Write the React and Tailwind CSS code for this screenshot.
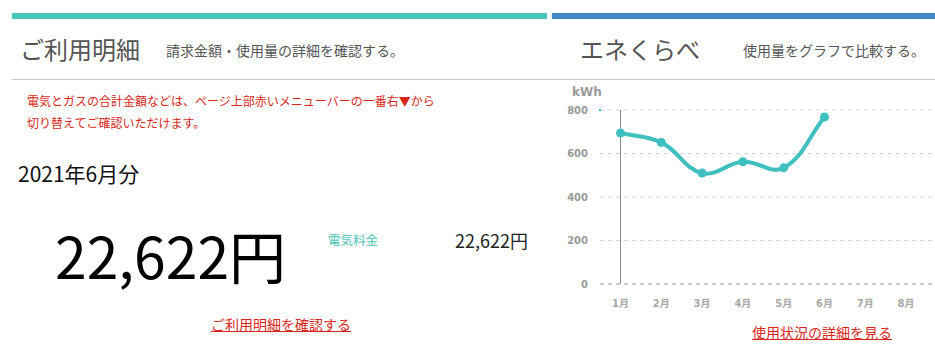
import React from 'react';

const usage = [694, 651, 510, 562, 534, 768];
const months = ['1月', '2月', '3月', '4月', '5月', '6月', '7月', '8月'];
const ticks = [800, 600, 400, 200, 0];

const colX = (i) => 68.5 + i * 40.8;
const valY = (v) => 204 - (v * 174) / 800;

// same spline as chart.js (tension 0.4)
function smoothPath(pts, t = 0.4) {
  const ctrl = pts.map((p, i) => {
    const prev = pts[i - 1] || p;
    const next = pts[i + 1] || p;
    const d01 = Math.hypot(p[0] - prev[0], p[1] - prev[1]);
    const d12 = Math.hypot(next[0] - p[0], next[1] - p[1]);
    const sum = d01 + d12 || 1;
    const fa = (t * d01) / sum;
    const fb = (t * d12) / sum;
    return {
      before: [p[0] - fa * (next[0] - prev[0]), p[1] - fa * (next[1] - prev[1])],
      after: [p[0] + fb * (next[0] - prev[0]), p[1] + fb * (next[1] - prev[1])],
    };
  });
  let d = `M${pts[0][0]},${pts[0][1]}`;
  for (let i = 1; i < pts.length; i++) {
    const a = ctrl[i - 1].after;
    const b = ctrl[i].before;
    d += ` C${a[0]},${a[1]} ${b[0]},${b[1]} ${pts[i][0]},${pts[i][1]}`;
  }
  return d;
}

function UsageChart() {
  const pts = usage.map((v, i) => [colX(i), valY(v)]);
  return (
    <svg width="383" height="239" viewBox="0 0 383 239" className="block">
      <g fontFamily="'DejaVu Sans', 'Noto Sans CJK JP', sans-serif" fontWeight="bold" fill="#9a9a9a">
        <text x="20" y="16" fontSize="12">kWh</text>
        {ticks.map((t) => (
          <g key={t}>
            <line
              x1="48"
              x2="383"
              y1={valY(t)}
              y2={valY(t)}
              stroke={t === 0 ? '#9a9a9a' : '#d6d6d6'}
              strokeDasharray="4 4"
            />
            <text x="36" y={valY(t) + 3.6} fontSize="10" textAnchor="end">{t}</text>
          </g>
        ))}
        {months.map((m, i) => (
          <text key={m} x={colX(i)} y="227" fontSize="10" textAnchor="middle" fill="#a8a8a8">{m}</text>
        ))}
      </g>
      <rect x="47" y="29" width="2" height="2" fill="#3fbfbf" />
      <line x1="68.5" x2="68.5" y1="30" y2="204" stroke="#8a8a8a" />
      <path d={smoothPath(pts)} fill="none" stroke="#3fbfbf" strokeWidth="4" strokeLinecap="round" strokeLinejoin="round" />
      {pts.map((p, i) => (
        <circle key={i} cx={p[0]} cy={p[1]} r="4.5" fill="#3fbfbf" />
      ))}
    </svg>
  );
}

export default function App() {
  return (
    <div className="w-[935px] h-[356px] bg-white pl-[12px] pt-[13px] flex overflow-hidden font-['Noto_Sans_CJK_JP',sans-serif] text-[#222]">
      {/* ご利用明細 */}
      <div className="w-[540px] flex flex-col">
        <div className="h-[6px] bg-[#48c6b7] mr-[5px]" />
        <div className="h-[61px] border-b border-[#c8c8c8] flex items-center pl-[8px]">
          <h2 className="text-[24px] leading-none text-[#555]">ご利用明細</h2>
          <p className="ml-[26px] text-[14px] text-[#555] mt-[2px]">請求金額・使用量の詳細を確認する。</p>
        </div>
        <p className="pl-[15px] pt-[10px] text-[12px] leading-[22px] text-[#d9261c]">
          電気とガスの合計金額などは、ページ上部赤いメニューバーの一番右▼から<br />
          切り替えてご確認いただけます。
        </p>
        <p className="pl-[6px] mt-[25px] text-[21px] leading-[28px] text-[#111]">2021年6月分</p>
        <div className="flex items-start mt-[35px] pl-[43px]">
          <div className="w-[273px] text-[57px] leading-[64px] text-black whitespace-nowrap">22,622円</div>
          <div className="w-[200px] flex items-center justify-between pt-[5px] leading-[26px]">
            <span className="text-[12.5px] text-[#4cc4b4]">電気料金</span>
            <span className="text-[18px] text-[#222]">22,622円</span>
          </div>
        </div>
        <div className="mt-[28px] flex justify-center pr-[2px]">
          <a href="#" className="text-[14px] leading-[20px] text-[#d9261c] underline">ご利用明細を確認する</a>
        </div>
      </div>

      {/* エネくらべ */}
      <div className="flex-1 flex flex-col">
        <div className="h-[6px] bg-[#4487c7]" />
        <div className="h-[61px] border-b border-[#c8c8c8] flex items-center pl-[28px]">
          <h2 className="text-[24px] leading-none text-[#555]">エネくらべ</h2>
          <p className="ml-[43px] text-[14px] text-[#555] mt-[2px]">使用量をグラフで比較する。</p>
        </div>
        <UsageChart />
        <div className="pl-[200px]">
          <a href="#" className="text-[14px] leading-[20px] text-[#d9261c] underline">使用状況の詳細を見る</a>
        </div>
      </div>
    </div>
  );
}
